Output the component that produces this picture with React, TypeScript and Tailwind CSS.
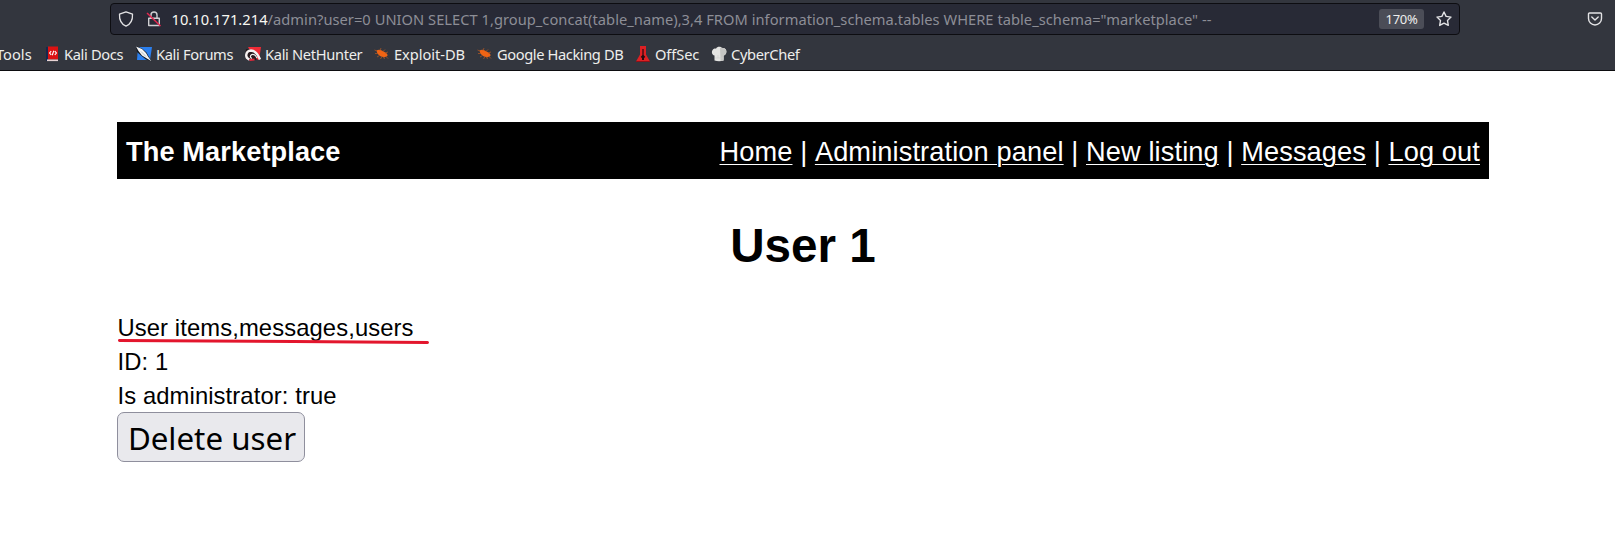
import type { ReactNode } from "react";

const DocsIcon = () => (
  <svg width="16" height="16" viewBox="0 0 16 16">
    <path d="M2 1h2v14H2z" fill="#16284e" />
    <path d="M4 .5h10v13H4z" fill="#dc1212" />
    <path d="M3 13.500h11v1.600H3z" fill="#e8d4d4" />
    <path d="M7.200 5.200L5.600 7l1.600 1.800M10.800 5.200L12.400 7l-1.600 1.800M9.800 4.800L8.200 9.200" stroke="#fff" strokeWidth="1.100" fill="none" />
  </svg>
);

const ForumsIcon = () => (
  <svg width="16" height="16" viewBox="0 0 16 16">
    <path d="M2 1h14l-2 13H1z" fill="#2b7fee" />
    <path d="M0 0l6 2.500 4.500 4L13 11l3 4.500-6-2-5-4L1 6z" fill="#151a22" />
    <path d="M0 .5L6 3l4 4 2 3.600 3.500 4.600-5-3L6 9.600 2.500 5z" fill="#f4f4f4" />
    <path d="M5 5.500l5 5" stroke="#8d98a5" strokeWidth=".6" />
  </svg>
);

const NetHunterIcon = () => (
  <svg width="16" height="16" viewBox="0 0 16 16">
    <path d="M3 1h13l-2 13-5-2z" fill="#ef2b36" />
    <path d="M1 3l7 1 5 4-2 6H2L0 11z" fill="#26191d" />
    <path d="M15 13.500C12.500 7.500 9.500 4.500 6 4.500c-5.500.3-6.500 7.500-1.500 9" fill="none" stroke="#f5f1f1" strokeWidth="2.400" />
    <path d="M12 12C10.500 9 8.500 8 6.800 8.600c-2 .8-1.800 3.200.2 3.900" fill="none" stroke="#f5f1f1" strokeWidth="1.200" />
    <path d="M4.500 14l5-.5" stroke="#e5283a" strokeWidth="1.800" />
  </svg>
);

const BugIcon = () => (
  <svg width="16" height="16" viewBox="0 0 16 16">
    <path d="M2.500 4.500C5 2.800 8 4 10.500 6c1.800 1 3 2 3.200 3.300-.8 1.700-3 2.200-5 1.700C5.500 10.200 3 8 2.500 4.500z" fill="#f06414" />
    <path d="M3 5L.5 4M4 7.500H1M5.500 9.500L3 11M8 10.500L6.500 13M6 4.500L7 2M9 5.500L11 3.500M11 7l3-1M11.500 10l2.500 2.500M9.500 10.800l1 2.200" stroke="#a95524" strokeWidth=".8" />
  </svg>
);

const OffSecIcon = () => (
  <svg width="16" height="16" viewBox="0 0 16 16">
    <path d="M5 0h6v8.500l4 7H1l4-7z" fill="#dd2023" />
    <path d="M7.400 3h1.200v6l1.700 2-1.300 1v2H7v-2l-1.300-1 1.700-2z" fill="#260b10" />
    <path d="M1 15.500h14" stroke="#8e1118" strokeWidth="1" />
  </svg>
);

const ChefIcon = () => (
  <svg width="16" height="16" viewBox="0 0 16 16">
    <path d="M3.500 14.500V9.500C.5 9 .3 5 2 3.500c1-1.200 2.500-1 3-.8C6 .5 9.500.2 11 2c3-.6 4.800 1.500 4.400 4-.2 2.200-1.500 3.200-2.800 3.500v5c-2.700.9-6.300.9-9.100 0z" fill="#e4e4e2" />
    <path d="M9 2c3-1 6 .8 6.400 3.500-.2 2.500-1.500 3.700-2.800 4v5l-3 .5z" fill="#c5c5c3" />
    <path d="M4 12h8.500M7 9v3" stroke="#d0d0ce" strokeWidth=".7" />
  </svg>
);

const bookmarks: { label: string; icon: ReactNode; slot: string; tracking: string }[] = [
  { label: "Kali Docs", icon: <DocsIcon />, slot: "w-[92px]", tracking: "tracking-[-0.35px]" },
  { label: "Kali Forums", icon: <ForumsIcon />, slot: "w-[109px]", tracking: "tracking-[-0.35px]" },
  { label: "Kali NetHunter", icon: <NetHunterIcon />, slot: "w-[129px]", tracking: "tracking-[-0.33px]" },
  { label: "Exploit-DB", icon: <BugIcon />, slot: "w-[103px]", tracking: "tracking-[-0.05px]" },
  { label: "Google Hacking DB", icon: <BugIcon />, slot: "w-[158px]", tracking: "tracking-[-0.4px]" },
  { label: "OffSec", icon: <OffSecIcon />, slot: "w-[76px]", tracking: "tracking-[-0.1px]" },
  { label: "CyberChef", icon: <ChefIcon />, slot: "w-[92px]", tracking: "tracking-[-0.35px]" },
];

const links = ["Home", "Administration panel", "New listing", "Messages", "Log out"];

function BrowserChrome() {
  return (
    <header className="h-[71px] border-b border-[#0c0c0f] bg-[#33363e] pt-[3px] font-['Noto_Sans',sans-serif] text-[14.67px] text-[#eeeeec]">
      <div className="flex h-8 items-center">
        <div className="ml-[110px] flex h-8 w-[1350px] shrink-0 items-center rounded-[4px] border border-[#0d0d11] bg-[#282a36] pr-[7px] pl-[7px]">
          <svg width="16" height="16" viewBox="0 0 16 16" fill="none" stroke="#e3e3e5" strokeWidth="1.300" strokeLinejoin="round">
            <path d="M8 .8l6.500 2.400c.3 5.500-1.700 9.800-6.500 12C3.200 13 1.200 8.700 1.500 3.200z" />
          </svg>
          <svg className="ml-3" width="16" height="16" viewBox="0 0 16 16" fill="none" strokeWidth="1.400">
            <path d="M5 7V4a3 3 0 0 1 6 0v3M2.700 7.300h10.600v7.200H2.700z" stroke="#cfcfd3" strokeLinejoin="round" />
            <path d="M1 2l13.500 13" stroke="#e22850" strokeWidth="1.500" />
          </svg>
          <div className="ml-[9.500px] grow whitespace-pre tracking-[0.035px] text-[#8d8e96]">
            <span className="text-[#f8f8f2]">10.10.171.214</span>
            {'/admin?user=0 UNION SELECT 1,group_concat(table_name),3,4 FROM information_schema.tables WHERE table_schema="marketplace" --'}
          </div>
          <div className="flex h-5 w-[45px] items-center justify-center rounded-[3px] bg-[#4b4d57] pt-[2px] text-[13px] tracking-[-0.3px]">170%</div>
          <svg className="ml-3" width="16" height="16" viewBox="0 0 16 16" fill="none" stroke="#e3e3e5" strokeWidth="1.400" strokeLinejoin="round">
            <path d="M8 1l2.100 4.400 4.900.7-3.500 3.400.8 4.900L8 12.100l-4.300 2.300.8-4.900L1 6.100l4.900-.7z" />
          </svg>
        </div>
        <svg className="ml-[127px]" width="16" height="16" viewBox="0 0 16 16" fill="none" stroke="#e3e3e5" strokeWidth="1.400" strokeLinecap="round" strokeLinejoin="round">
          <path d="M2.500 2h11a1 1 0 0 1 1 1v4.500a6.500 6.500 0 0 1-13 0V3a1 1 0 0 1 1-1z" />
          <path d="M4.800 6L8 9l3.200-3" />
        </svg>
      </div>
      <nav className="flex h-[35px] items-center whitespace-nowrap pt-[3px]">
        <span className="w-11 shrink-0">
          <span className="-ml-1">Tools</span>
        </span>
        {bookmarks.map((b) => (
          <span key={b.label} className={`flex shrink-0 items-center gap-1 ${b.slot}`}>
            {b.icon}
            <span className={`-mt-px ${b.tracking}`}>{b.label}</span>
          </span>
        ))}
      </nav>
    </header>
  );
}

export default function App() {
  return (
    <div className="h-[544px] overflow-hidden bg-white font-['Liberation_Sans',sans-serif] text-black">
      <BrowserChrome />
      <main className="ml-[117px] w-[1372px] pt-[51px]">
        <div className="flex h-[57px] items-center justify-between bg-black px-[9px] pt-[4px] text-[27.200px] text-white">
          <span className="font-bold tracking-[0.1px]">The Marketplace</span>
          <div className="flex">
            {links.map((l, i) => (
              <span key={l} className="flex">
                {i > 0 && <span className="w-[22.400px] text-center">|</span>}
                <a className="tracking-[0.12px] underline decoration-1 underline-offset-[3px]">{l}</a>
              </span>
            ))}
          </div>
        </div>
        <h1 className="mt-[39px] text-center text-[47.600px] leading-[56px] font-bold">User 1</h1>
        <div className="mt-[37px] text-[23.800px] leading-[34px] tracking-[0.1px]">
          <div className="relative pl-[0.500px]">
            User items,messages,users
            <svg className="absolute top-[26px] left-0" width="314" height="10" viewBox="0 0 314 10">
              <path d="M2.500 3.500C100 4.200 210 4.500 310.500 5.500" fill="none" stroke="#e3162d" strokeWidth="3" strokeLinecap="round" />
            </svg>
          </div>
          <div className="pl-[0.500px]">ID: 1</div>
          <div className="pl-[0.500px]">Is administrator: true</div>
        </div>
        <button className="-mt-px flex h-[50px] w-[188px] items-center justify-center rounded-[7px] border border-[#8f8f9d] bg-[#e9e9ed] pt-[3px] pl-[2px] font-['Noto_Sans',sans-serif] text-[31.300px]">
          Delete user
        </button>
      </main>
    </div>
  );
}
